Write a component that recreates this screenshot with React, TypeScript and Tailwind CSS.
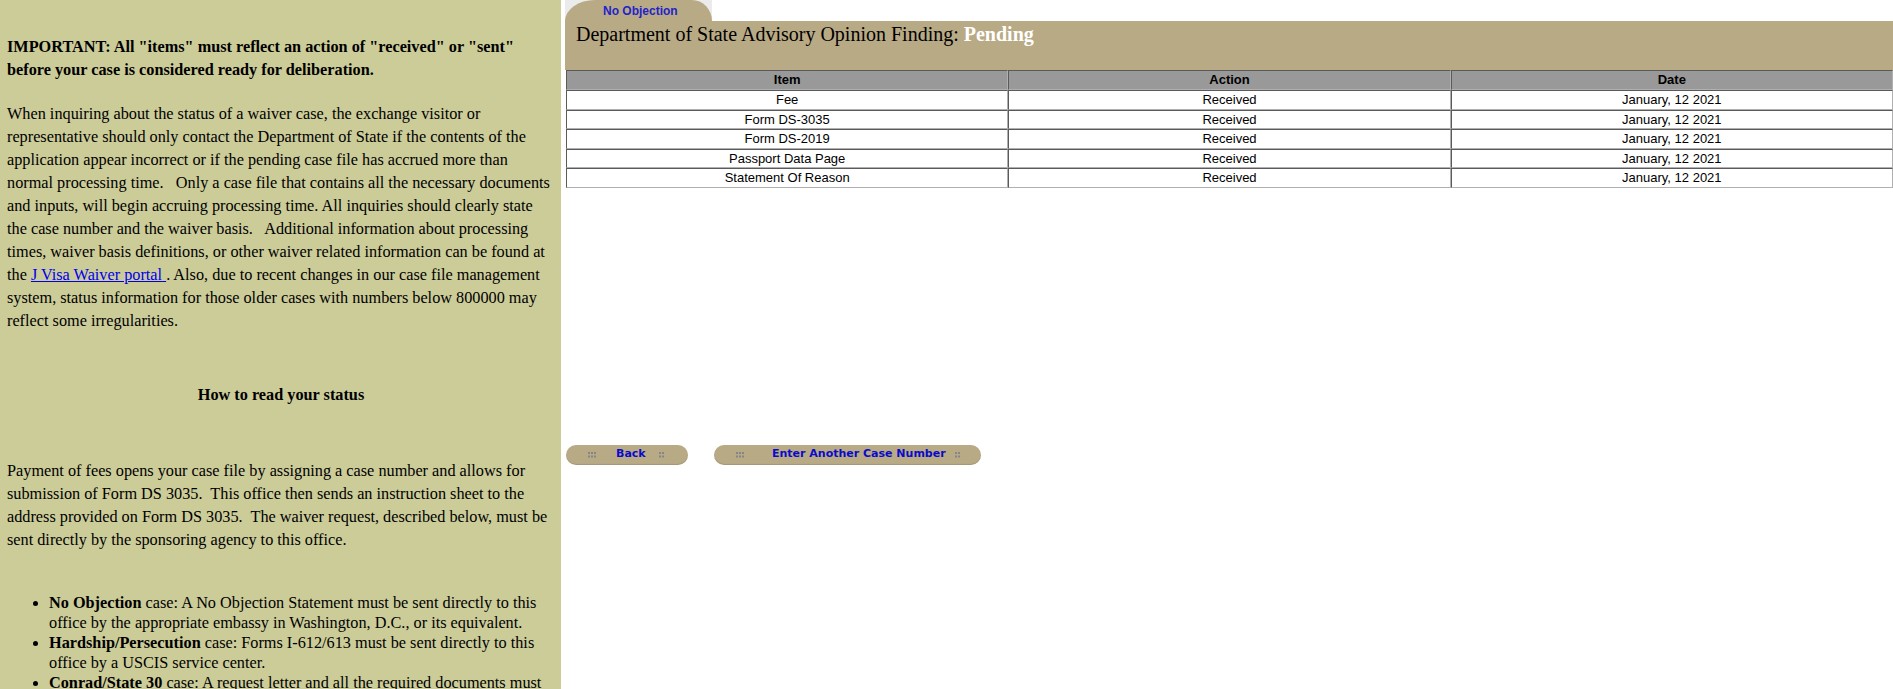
import React from 'react';

const rows = [
  { item: 'Fee', action: 'Received', date: 'January, 12 2021' },
  { item: 'Form DS-3035', action: 'Received', date: 'January, 12 2021' },
  { item: 'Form DS-2019', action: 'Received', date: 'January, 12 2021' },
  { item: 'Passport Data Page', action: 'Received', date: 'January, 12 2021' },
  { item: 'Statement Of Reason', action: 'Received', date: 'January, 12 2021' },
];

const Dots = ({ cols }: { cols: number }) => (
  <svg width={cols === 3 ? 8 : 5} height={6} viewBox={`0 0 ${cols === 3 ? 8 : 5} 6`} className="shrink-0">
    {[0, 1].map((r) =>
      Array.from({ length: cols }).map((_, c) => (
        <rect key={`${r}-${c}`} x={c * 3} y={r * 3.5} width={2} height={2} fill="#858585" />
      ))
    )}
  </svg>
);

const serif = { fontFamily: '"Liberation Serif", "Times New Roman", serif' };

const App: React.FC = () => {
  return (
    <div className="flex h-[689px] w-[1893px] overflow-hidden bg-white">
      {/* Left info panel */}
      <aside
        className="w-[561px] shrink-0 bg-[#cccc99] pl-[7px] pr-[6px] pt-[36px] text-[16.25px] text-black"
        style={serif}
      >
        <p className="font-bold leading-[23px]">
          IMPORTANT: All "items" must reflect an action of "received" or "sent" before your case is considered ready for deliberation.
        </p>
        <p className="mt-[21px] leading-[23px]">
          When inquiring about the status of a waiver case, the exchange visitor or representative should only contact the
          Department of State if the contents of the application appear incorrect or if the pending case file has accrued
          more than normal processing time.{'\u00a0\u00a0 '}Only a case file that contains all the necessary documents and
          inputs, will begin accruing processing time. All inquiries should clearly state the case number and the waiver
          basis.{'\u00a0\u00a0 '}Additional information about processing times, waiver basis definitions, or other waiver
          related information can be found at the{' '}
          <a href="#" className="text-[#0000ee] underline">
            J Visa Waiver portal{' '}
          </a>
          . Also, due to recent changes in our case file management system, status information for those older cases with
          numbers below 800000 may reflect some irregularities.
        </p>
        <p className="mt-[51px] text-center font-bold leading-[23px]">How to read your status</p>
        <p className="mt-[53px] leading-[23px]">
          Payment of fees opens your case file by assigning a case number and allows for submission of Form DS 3035.
          {'\u00a0 '}This office then sends an instruction sheet to the address provided on Form DS 3035.{'\u00a0 '}The
          waiver request, described below, must be sent directly by the sponsoring agency to this office.
        </p>
        <ul className="mt-[41px] list-disc pl-[42px] leading-[20px]">
          <li>
            <b>No Objection</b> case: A No Objection Statement must be sent directly to this office by the appropriate
            embassy in Washington, D.C., or its equivalent.
          </li>
          <li>
            <b>Hardship/Persecution</b> case: Forms I-612/613 must be sent directly to this office by a USCIS service
            center.
          </li>
          <li>
            <b>Conrad/State 30</b> case: A request letter and all the required documents must be sent directly to this
            office by the designated State Department of Public Health.
          </li>
        </ul>
      </aside>

      {/* Status area */}
      <main className="ml-[4px] flex-1">
        <div className="h-[21px] w-[147px] bg-[#ebebeb]">
          <div className="flex h-full items-start rounded-tl-[30px_21px] rounded-tr-[20px_21px] bg-[#b9aa86] pl-[38px] pt-[5px]">
            <span
              className="text-[12px] font-bold leading-[13px] text-[#2323c8]"
              style={{ fontFamily: '"Liberation Sans", Arial, sans-serif' }}
            >
              No Objection
            </span>
          </div>
        </div>
        <div className="h-[49px] bg-[#b9aa86] pl-[11px] pt-[1px]">
          <h1 className="text-[20px] leading-[25px] text-black" style={serif}>
            Department of State Advisory Opinion Finding: <b className="text-white">Pending</b>
          </h1>
        </div>

        <table
          className="ml-[1px] w-[1327px] table-fixed border-separate border-spacing-0 text-[13px] text-black"
          style={{ fontFamily: '"Liberation Sans", Arial, sans-serif' }}
        >
          <thead>
            <tr>
              {['Item', 'Action', 'Date'].map((h) => (
                <th
                  key={h}
                  className="border border-b-[#b0b0b0] border-l-[#5a5a5a] border-r-[#b0b0b0] border-t-[#5a5a5a] bg-[#999999] p-0 text-center font-bold leading-[18px]"
                >
                  {h}
                </th>
              ))}
            </tr>
          </thead>
          <tbody>
            {rows.map((r) => (
              <tr key={r.item}>
                {[r.item, r.action, r.date].map((v, i) => (
                  <td
                    key={i}
                    className="border border-b-[#b0b0b0] border-l-[#5a5a5a] border-r-[#b0b0b0] border-t-[#5a5a5a] bg-white p-0 text-center leading-[17.5px]"
                  >
                    {v}
                  </td>
                ))}
              </tr>
            ))}
          </tbody>
        </table>

        <div
          className="ml-[1px] mt-[257px] flex gap-[26px] text-[11px] font-bold text-[#0a0acc]"
          style={{ fontFamily: '"DejaVu Sans", Tahoma, Verdana, sans-serif' }}
        >
          <button className="flex h-[20px] w-[122px] items-center rounded-full bg-[#b9aa86] pl-[22px] shadow-[inset_0_-1px_1px_rgba(0,0,0,0.12)]">
            <Dots cols={3} />
            <span className="ml-[20px]">Back</span>
            <span className="ml-[13px]">
              <Dots cols={2} />
            </span>
          </button>
          <button className="flex h-[20px] w-[267px] items-center rounded-full bg-[#b9aa86] pl-[22px] shadow-[inset_0_-1px_1px_rgba(0,0,0,0.12)]">
            <Dots cols={3} />
            <span className="ml-[28px]">Enter Another Case Number</span>
            <span className="ml-[9px]">
              <Dots cols={2} />
            </span>
          </button>
        </div>
      </main>
    </div>
  );
};

export default App;
